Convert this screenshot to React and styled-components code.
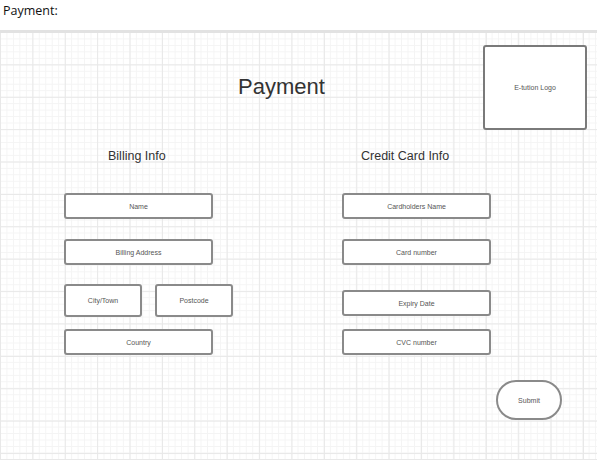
import React from "react";
import styled, { createGlobalStyle } from "styled-components";

const GlobalStyle = createGlobalStyle`
  body {
    margin: 0;
    background: #fff;
  }
`;

const Page = styled.div`
  width: 597px;
`;

const PageLabel = styled.div`
  margin: 2px 0 11px 3px;
  font-family: "Open Sans", sans-serif;
  font-size: 12.5px;
  line-height: 17px;
  color: #111;
`;

// lucid style grid: faint minor lines, slightly darker every 5th
const Canvas = styled.div`
  height: 426px;
  border-top: 3px solid #e2e2e2;
  border-bottom: 1px solid #e8e8e8;
  background-color: #fff;
  background-image:
    linear-gradient(to right, #e8e8e8 1px, transparent 1px),
    linear-gradient(to bottom, #e8e8e8 1px, transparent 1px),
    linear-gradient(to right, #f4f4f4 1px, transparent 1px),
    linear-gradient(to bottom, #f4f4f4 1px, transparent 1px);
  background-size: 32.4px 32.4px, 32.4px 32.4px, 6.48px 6.48px, 6.48px 6.48px;
  background-position: 0 -1px;
  font-family: "Liberation Sans", Arial, sans-serif;
  color: #333;
`;

const TopRow = styled.div`
  display: flex;
  align-items: flex-start;
`;

const Title = styled.h1`
  margin: 41px 0 0 238px;
  font-size: 22px;
  font-weight: normal;
  line-height: 26px;
  color: #333;
`;

const LogoBox = styled.div`
  margin: 12px 10px 0 auto;
  width: 104px;
  height: 85px;
  box-sizing: border-box;
  border: 2px solid #7a7a7a;
  border-radius: 3px;
  background: #fff;
  display: flex;
  align-items: center;
  justify-content: center;
  font-size: 7px;
  color: #555;
`;

const Columns = styled.div`
  display: flex;
  gap: 129px;
  margin-top: 19px;
  padding-left: 64px;
`;

const Column = styled.div`
  width: 149px;
  display: flex;
  flex-direction: column;
`;

const Heading = styled.h2`
  margin: 0 0 0 ${(p) => p.$indent}px;
  font-size: 12.5px;
  font-weight: normal;
  line-height: 15px;
  color: #333;
  white-space: nowrap;
`;

const Field = styled.div`
  box-sizing: border-box;
  flex-shrink: 0;
  width: ${(p) => p.$w || 149}px;
  height: ${(p) => p.$h || 26}px;
  margin-top: ${(p) => p.$mt || 0}px;
  border: 2px solid #8a8a8a;
  border-radius: 3px;
  background: #fff;
  display: flex;
  align-items: center;
  justify-content: center;
  font-size: 7px;
  color: #555;
`;

const FieldRow = styled.div`
  display: flex;
  gap: 13px;
  width: max-content;
  margin-top: ${(p) => p.$mt}px;
`;

const Footer = styled.div`
  display: flex;
  justify-content: flex-end;
  padding-right: 35px;
  margin-top: 25px;
`;

const SubmitButton = styled.div`
  box-sizing: border-box;
  width: 66px;
  height: 40px;
  border: 2px solid #8a8a8a;
  border-radius: 20px;
  background: #fff;
  display: flex;
  align-items: center;
  justify-content: center;
  font-size: 7px;
  color: #555;
`;

export default function App() {
  return (
    <Page>
      <GlobalStyle />
      <PageLabel>Payment:</PageLabel>
      <Canvas>
        <TopRow>
          <Title>Payment</Title>
          <LogoBox>E-tution Logo</LogoBox>
        </TopRow>

        <Columns>
          <Column>
            <Heading $indent={44}>Billing Info</Heading>
            <Field $mt={29}>Name</Field>
            <Field $mt={20}>Billing Address</Field>
            <FieldRow $mt={19}>
              <Field $w={78} $h={33}>City/Town</Field>
              <Field $w={78} $h={33}>Postcode</Field>
            </FieldRow>
            <Field $mt={12}>Country</Field>
          </Column>

          <Column>
            <Heading $indent={19}>Credit Card Info</Heading>
            <Field $mt={29}>Cardholders Name</Field>
            <Field $mt={20}>Card number</Field>
            <Field $mt={25}>Expiry Date</Field>
            <Field $mt={13}>CVC number</Field>
          </Column>
        </Columns>

        <Footer>
          <SubmitButton>Submit</SubmitButton>
        </Footer>
      </Canvas>
    </Page>
  );
}
